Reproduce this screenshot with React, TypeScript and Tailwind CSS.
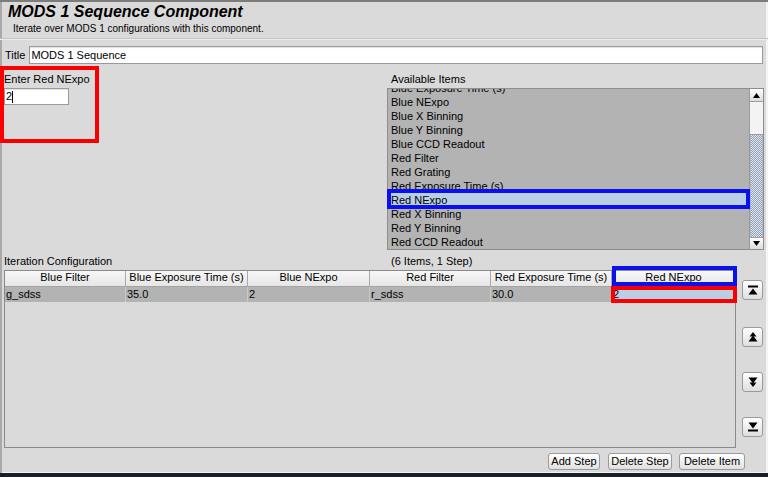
import React from "react";

const items = [
  "Blue Exposure Time (s)",
  "Blue NExpo",
  "Blue X Binning",
  "Blue Y Binning",
  "Blue CCD Readout",
  "Red Filter",
  "Red Grating",
  "Red Exposure Time (s)",
  "Red NExpo",
  "Red X Binning",
  "Red Y Binning",
  "Red CCD Readout",
];

const columns = [
  { head: "Blue Filter", value: "g_sdss", w: "w-[121px] border-r" },
  { head: "Blue Exposure Time (s)", value: "35.0", w: "w-[122px] border-r" },
  { head: "Blue NExpo", value: "2", w: "w-[122px] border-r" },
  { head: "Red Filter", value: "r_sdss", w: "w-[121px] border-r" },
  { head: "Red Exposure Time (s)", value: "30.0", w: "w-[121px] border-r" },
  { head: "Red NExpo", value: "2", w: "w-[123px]" },
];

function MoveIcon({ kind }: { kind: "top" | "up" | "down" | "bottom" }) {
  return (
    <svg width="12" height="12" viewBox="0 0 12 12" fill="#000">
      {kind === "top" && (
        <>
          <rect x="1" y="1.5" width="10" height="2" />
          <polygon points="6,4.5 10.5,10.5 1.5,10.5" />
        </>
      )}
      {kind === "up" && (
        <>
          <polygon points="6,1 9.5,5.5 2.5,5.5" />
          <polygon points="6,4.5 10.5,10.5 1.5,10.5" />
        </>
      )}
      {kind === "down" && (
        <>
          <polygon points="1.5,1.5 10.5,1.5 6,7.5" />
          <polygon points="2.5,6.5 9.5,6.5 6,11" />
        </>
      )}
      {kind === "bottom" && (
        <>
          <polygon points="1.5,1.5 10.5,1.5 6,7.5" />
          <rect x="1" y="8.5" width="10" height="2" />
        </>
      )}
    </svg>
  );
}

function SideButton({ kind, className }: { kind: "top" | "up" | "down" | "bottom"; className: string }) {
  return (
    <div
      className={`w-[21px] h-[20px] flex items-center justify-center rounded-[3px] border border-[#9a9a9a] bg-linear-to-b from-white to-[#dedede] ${className}`}
    >
      <MoveIcon kind={kind} />
    </div>
  );
}

function PushButton({ label, w }: { label: string; w: string }) {
  return (
    <div
      className={`${w} h-[17px] flex items-center justify-center rounded-[3px] border border-[#9a9a9a] bg-linear-to-b from-white to-[#e0e0e0] leading-[13px]`}
    >
      {label}
    </div>
  );
}

export default function App() {
  return (
    <div className="w-[768px] h-[477px] bg-[#1b1f27] overflow-hidden font-['Liberation_Sans',Arial,sans-serif] text-[11px] leading-[13px] text-black">
      <div className="h-[473px] flex flex-col bg-[#dadada] shadow-[inset_0_2px_0_#7c7c7c,inset_2px_0_0_#a9a9a9,inset_-2px_0_0_#f4f4f4,inset_0_-1px_0_#f4f4f4]">
        {/* header */}
        <div className="pt-[2px] pl-[8px]">
          <div className="text-[16px] leading-[19px] font-bold italic">MODS 1 Sequence Component</div>
          <div className="mt-[1px] pl-[5px] text-[10px] leading-[13px]">
            Iterate over MODS 1 configurations with this component.
          </div>
        </div>
        <div className="mt-[3px] h-[2px] border-t border-t-[#c4c4c4] border-b border-b-[#ececec]" />

        {/* title */}
        <div className="mt-[6px] h-[18px] flex items-center gap-[4px] px-[5px]">
          <span>Title</span>
          <div className="flex-1 h-[18px] flex items-center pl-[1px] bg-white border border-[#9a9a9a] shadow-[inset_0_1px_1px_rgba(0,0,0,0.12)]">
            MODS 1 Sequence
          </div>
        </div>

        {/* editor + available items */}
        <div className="h-[186px] flex">
          <div className="w-[387px]">
            <div className="mt-[2px] w-[99px] h-[77px] border-4 border-[#fb0000] pt-[3px]">
              <div>Enter Red NExpo</div>
              <div className="mt-[2px] w-[65px] h-[17px] flex items-center pl-[1px] bg-white border border-[#9a9a9a] shadow-[inset_0_1px_1px_rgba(0,0,0,0.12)]">
                <span>2</span>
                <span className="w-px h-[12px] bg-black" />
              </div>
            </div>
          </div>

          <div className="flex-1 pr-[4px]">
            <div className="pt-[9px] pl-[4px]">Available Items</div>
            <div className="mt-[2px] h-[162px] flex border border-[#8e8e8e]">
              <div className="flex-1 bg-[#b3b3b3]">
                <div className="h-[6px] overflow-hidden pl-[3px]">
                  <div className="-mt-[8px] leading-[14px]">{items[0]}</div>
                </div>
                {items.slice(1).map((it) => (
                  <div
                    key={it}
                    className={`relative h-[14px] leading-[14px] pl-[3px] ${it === "Red NExpo" ? "bg-[#b8cfe6]" : ""}`}
                  >
                    {it}
                    {it === "Red NExpo" && (
                      <div className="absolute -top-[4px] -bottom-[2px] -left-[1px] -right-[1px] border-4 border-[#0a10ee]" />
                    )}
                  </div>
                ))}
              </div>
              {/* scrollbar */}
              <div className="w-[14px] flex flex-col border-l border-[#9a9a9a]">
                <div className="h-[13px] flex items-center justify-center bg-linear-to-b from-white to-[#dcdcdc] border-b border-[#a0a0a0]">
                  <svg width="7" height="5" viewBox="0 0 7 5">
                    <polygon points="3.5,0 7,5 0,5" fill="#000" />
                  </svg>
                </div>
                <div className="h-[33px] bg-[#f3f3f3] border-b border-[#9a9a9a]" />
                <div className="h-[102px] bg-[conic-gradient(#93a2b6_25%,#dfe6ee_0_50%,#93a2b6_0_75%,#dfe6ee_0)] bg-[length:2px_2px] border-x border-[#aab6c6]" />
                <div className="h-[12px] flex items-center justify-center bg-linear-to-b from-white to-[#dcdcdc] border-t border-[#a0a0a0]">
                  <svg width="7" height="5" viewBox="0 0 7 5">
                    <polygon points="0,0 7,0 3.5,5" fill="#000" />
                  </svg>
                </div>
              </div>
            </div>
          </div>
        </div>

        {/* labels */}
        <div className="mt-[5px] h-[13px] flex">
          <div className="w-[387px] pl-[4px]">Iteration Configuration</div>
          <div className="pl-[4px]">(6 Items, 1 Step)</div>
        </div>

        {/* iteration table */}
        <div className="mt-[2px] h-[178px] flex pl-[4px]">
          <div className="relative w-[732px] border border-[#8a8a8a]">
            <div className="flex h-[16px] border-b border-[#a4a4a4] bg-linear-to-b from-[#f7f7f7] to-[#e6e6e6]">
              {columns.map((c) => (
                <div key={c.head} className={`${c.w} border-[#aaaaaa] flex items-center justify-center pb-[2px]`}>
                  {c.head}
                </div>
              ))}
            </div>
            <div className="flex h-[15px] bg-[#b3b3b3]">
              {columns.map((c, i) => (
                <div
                  key={c.head}
                  className={`${c.w} border-[#c9c9c9] flex items-center pl-[1px] ${i === 5 ? "bg-[#b8cfe6]" : ""}`}
                >
                  {c.value}
                </div>
              ))}
            </div>
            <div className="absolute left-[607px] -top-[5px] w-[125px] h-[20px] border-4 border-[#0a10ee]" />
            <div className="absolute left-[606px] top-[15px] w-[126px] h-[17px] border-4 border-[#fb0000]" />
          </div>
          <div className="ml-[6px] w-[21px] flex flex-col">
            <SideButton kind="top" className="mt-[10px]" />
            <SideButton kind="up" className="mt-[27px]" />
            <SideButton kind="down" className="mt-[25px]" />
            <SideButton kind="bottom" className="mt-[25px]" />
          </div>
        </div>

        {/* bottom buttons */}
        <div className="mt-[5px] flex justify-end pr-[23px]">
          <PushButton label="Add Step" w="w-[52px]" />
          <div className="w-[8px]" />
          <PushButton label="Delete Step" w="w-[64px]" />
          <div className="w-[7px]" />
          <PushButton label="Delete Item" w="w-[66px]" />
        </div>
      </div>
    </div>
  );
}
